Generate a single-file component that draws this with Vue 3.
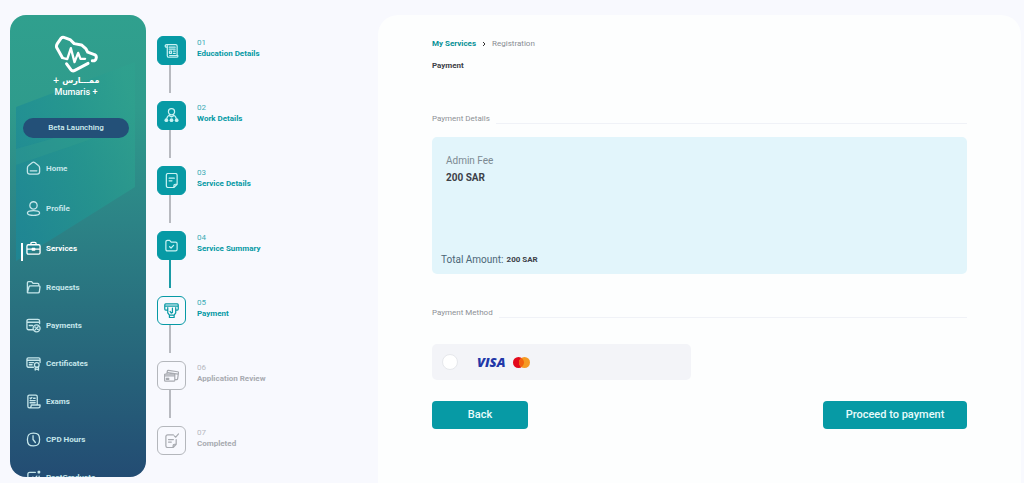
<script setup>
import { ref } from 'vue'

const method = ref('')

const nav = [
  { label: 'Home', icon: 'home' },
  { label: 'Profile', icon: 'profile' },
  { label: 'Services', icon: 'services', active: true },
  { label: 'Requests', icon: 'requests' },
  { label: 'Payments', icon: 'payments' },
  { label: 'Certificates', icon: 'certificates' },
  { label: 'Exams', icon: 'exams' },
  { label: 'CPD Hours', icon: 'clock' },
  { label: 'PostGraduate', icon: 'postgraduate' },
]

const navPaths = {
  home: 'M1.500 7.500 Q1.500 5.800 2.800 4.800 L6.500 1.800 Q8 .700 9.500 1.800 L13.200 4.800 Q14.500 5.800 14.500 7.500 V11.500 Q14.500 14 12 14 H4 Q1.500 14 1.500 11.500 Z M4.500 10.500 H11.500',
  profile: 'M8 .8 a3.900 3.900 0 1 1 0 7.800 a3.900 3.900 0 1 1 0 -7.800 Z M8 10.300 C11.500 10.300 14.500 11.100 14.500 12.900 C14.500 14.700 11.500 15.400 8 15.400 C4.500 15.400 1.500 14.700 1.500 12.900 C1.500 11.100 4.500 10.300 8 10.300 Z',
  services: 'M2.500 4 H13.500 Q15 4 15 5.500 V12.500 Q15 14 13.500 14 H2.500 Q1 14 1 12.500 V5.500 Q1 4 2.500 4 Z M5.200 4 V2.800 Q5.200 1.500 6.500 1.500 H9.500 Q10.800 1.500 10.800 2.800 V4 M1 8.700 H6.500 M9.500 8.700 H15 M6.700 8 H9.300 V9.600 H6.700 Z',
  requests: 'M1.500 13.500 V3 Q1.500 1.800 2.700 1.800 H6 L7.500 3.600 H12.500 Q13.700 3.600 13.700 4.800 V6.300 M1.500 13.500 L3.200 7.300 Q3.500 6.300 4.600 6.300 H13.700 Q15.100 6.300 14.900 7.600 L14.200 12.800 Q14 13.800 12.900 13.800 H2.200 Q1.500 13.800 1.500 13',
  payments: 'M7.500 12.500 H2.800 Q1 12.500 1 10.700 V3.300 Q1 1.500 2.800 1.500 H12.700 Q14.500 1.500 14.500 3.300 V6 M1 4.500 H14.500 M3.500 8 H7 M11.300 7.300 a3.700 3.700 0 1 1 0 7.400 a3.700 3.700 0 1 1 0 -7.400 Z M9.800 12.600 L12.900 9.400 M9.500 9.800 H10.300 M12.300 12.200 H13.100',
  certificates: 'M8 12 H2.500 Q1 12 1 10.500 V3.500 Q1 2 2.500 2 H13.500 Q15 2 15 3.500 V7 M1 4.500 H15 M3.500 7 H8 M3.500 9.300 H6.500 M11.500 7 a2.500 2.500 0 1 1 0 5 a2.500 2.500 0 1 1 0 -5 Z M9.800 11.500 V15 L11.500 13.900 L13.300 15 V11.500',
  exams: 'M2 13 V2.800 Q2 1.200 3.600 1.200 H10.500 Q12 1.200 12 2.800 V11.500 M5.500 11.700 H15 V12.700 Q15 14.700 13 14.700 H3.600 Q2 14.700 2 13 M5.500 11.700 V13 Q5.300 14.700 3.600 14.700 M4.300 4.300 L5 5 L6.300 3.700 M8 4.500 H9.800 M4.300 7 H9.800 M4.300 9.300 H9.800',
  clock: 'M8 1.200 C12.800 1.200 14.500 3 14.500 8 C14.500 13 12.800 14.800 8 14.800 C3.200 14.800 1.500 13 1.500 8 C1.500 3 3.200 1.200 8 1.200 Z M7.500 4 V8 L10 11.200',
  postgraduate: 'M10 2.500 H4 Q2 2.500 2 4.500 V12.500 Q2 14.500 4 14.500 H12 Q14 14.500 14 12.500 V6.500 M13 1.500 H14.500 V3 H13 Z M5 10.500 L7.300 7.500 L9 9.500 L11.500 6.500',
}

const steps = [
  { n: '01', label: 'Education Details', icon: 'education', state: 'done' },
  { n: '02', label: 'Work Details', icon: 'work', state: 'done' },
  { n: '03', label: 'Service Details', icon: 'note', state: 'done' },
  { n: '04', label: 'Service Summary', icon: 'folder', state: 'done last-done' },
  { n: '05', label: 'Payment', icon: 'pay', state: 'current' },
  { n: '06', label: 'Application Review', icon: 'cards', state: 'todo' },
  { n: '07', label: 'Completed', icon: 'completed', state: 'todo' },
]

const stepPaths = {
  education: 'M3.500 4.500 H2.500 Q1.300 4.500 1.300 3.200 Q1.300 1.800 2.800 1.800 H12.500 Q14 1.800 14 3.300 V13.500 M3.500 3 V13.500 Q3.500 15.200 5.200 15.200 H13.500 Q14.800 15.200 14.800 14 V13.500 H6 M5.500 4.500 H12 M5.500 6.500 H12 M5.800 8.700 H8 V11 H5.800 Z M10 8.700 H12 M10 11 H12',
  work: 'M8 .700 a3.300 3.300 0 1 1 0 6.600 a3.300 3.300 0 1 1 0 -6.600 Z M3 11 L3.600 9.500 Q4 8.500 5.200 8 L6 7 M13 11 L12.400 9.500 Q12 8.500 10.800 8 L10 7 M5.200 8 L8 9.500 L10.800 8',
  note: 'M10.500 15.500 H4.500 Q2.500 15.500 2.500 13.500 V2.500 Q2.500 .500 4.500 .500 H12 Q14 .500 14 2.500 V12 L10.500 15.500 V13.500 Q10.500 12 12 12 H14 M5.500 5.500 H11 M5.500 8.300 H8.500',
  folder: 'M2 12 V4.200 Q2 2.500 3.700 2.500 H6 L7.700 4.500 H12.300 Q14 4.500 14 6.200 V12 Q14 13.700 12.300 13.700 H3.700 Q2 13.700 2 12 Z M6 9.300 L7.500 10.700 L10.200 7.800',
  pay: 'M3.200 7.500 H1.800 Q.800 7.500 .800 6.500 V2 Q.800 1 1.800 1 H14.200 Q15.200 1 15.200 2 V6.500 Q15.200 7.500 14.200 7.500 H12.800 M.800 3.300 H15.200 M4 5 V10.500 L5.800 13 V15.500 H10.800 V13 L12.500 10.500 V5 M5.800 13 H10.800 M6.500 9 L7.800 10.700 L9 10 V5.500',
  cards: 'M1.500 6.500 H10.500 Q11.500 6.500 11.500 7.500 V13 Q11.500 14 10.500 14 H1.500 Q.500 14 .500 13 V7.500 Q.500 6.500 1.500 6.500 Z M.500 8.500 H11.500 M2.500 11 H5 V12.200 H2.500 Z M3 6.500 L3.500 3.500 Q3.700 2.500 4.700 2.600 L14.500 4 Q15.700 4.200 15.500 5.200 L14.500 11.500 Q14.300 12.500 13.300 12.400 L11.500 12.200 M4 4.800 L15 6.500',
  completed: 'M10 2 H4 Q2 2 2 4 V13.500 Q2 15.500 4 15.500 H9.700 L13 12 V7 M13 12 H11.200 Q9.700 12 9.700 13.500 V15.500 M4.800 7 H10 M4.800 9.700 H7.800 M11 3 L12.500 4.500 L15.500 1',
}
</script>

<template>
  <div class="page">
    <aside class="sidebar">
      <svg class="backdrop" viewBox="0 0 136 462" preserveAspectRatio="none" aria-hidden="true">
        <defs>
          <linearGradient id="facet" x1="0" y1="0.700" x2="1" y2="0.250">
            <stop offset="0" stop-color="#1c8997" stop-opacity=".75" />
            <stop offset=".55" stop-color="#239590" stop-opacity=".75" />
            <stop offset="1" stop-color="#2ea18e" stop-opacity=".7" />
          </linearGradient>
        </defs>
        <polygon points="6,92 125,47 125,172 42,224 6,246" fill="url(#facet)" />
        <polygon points="6,134 62,118 125,108 70,128 6,150" fill="#3aa58a" opacity=".25" />
      </svg>
      <div class="brand">
        <svg class="brand-mark" viewBox="162 104 136 118" aria-hidden="true">
          <g fill="none" stroke="#fff" stroke-width="9" stroke-linecap="round" stroke-linejoin="round">
            <path d="M187 172 L170 142 Q168 136 172 130 L183 114 Q188 109 194 112 L212 119 L223 130 L245 134 L258 145 L264 156 L286 164 Q292 168 289 176 Q287 183 278 182" />
            <path d="M200 191 L213 209 Q218 215 225 211 L265 190" />
            <path d="M187 173 L202 177 L213 144 L224 186 L235 158 L242 176 H256" stroke-width="7" />
          </g>
        </svg>
        <span class="brand-ar" dir="rtl">ممـــارس +</span>
        <span class="brand-en">Mumaris +</span>
      </div>
      <div class="beta">Beta Launching</div>
      <nav class="nav">
        <a v-for="item in nav" :key="item.label" href="#" :class="{ active: item.active }">
          <svg viewBox="0 0 16 16" aria-hidden="true"><path :d="navPaths[item.icon]" /></svg>
          <span>{{ item.label }}</span>
        </a>
      </nav>
    </aside>

    <ol class="steps">
      <li v-for="step in steps" :key="step.n" :class="step.state">
        <span class="tile">
          <svg viewBox="0 0 16 16" aria-hidden="true">
            <path :d="stepPaths[step.icon]" />
            <g v-if="step.icon === 'work'" class="solid">
              <circle cx="2.500" cy="13" r="2" />
              <circle cx="8" cy="13" r="2" />
              <circle cx="13.500" cy="13" r="2" />
            </g>
          </svg>
        </span>
        <span class="step-text">
          <span class="step-n">{{ step.n }}</span>
          <span class="step-label">{{ step.label }}</span>
        </span>
      </li>
    </ol>

    <main class="panel">
      <div class="crumbs">
        <a href="#">My Services</a>
        <svg viewBox="0 0 4 6" aria-hidden="true"><path d="M1 1 L3 3 L1 5" /></svg>
        <span>Registration</span>
      </div>
      <h1>Payment</h1>

      <h2><span>Payment Details</span></h2>
      <section class="fees">
        <div class="fee">
          <span class="fee-name">Admin Fee</span>
          <strong>200 SAR</strong>
        </div>
        <div class="total">
          <span>Total Amount:</span>
          <strong>200 SAR</strong>
        </div>
      </section>

      <h2 class="second"><span>Payment Method</span></h2>
      <label class="method">
        <input v-model="method" type="radio" name="method" value="card" aria-label="Visa or Mastercard" />
        <span class="visa">VISA</span>
        <svg class="mastercard" viewBox="0 0 17 11" aria-hidden="true">
          <circle cx="5.500" cy="5.500" r="5.500" fill="#e3091c" />
          <circle cx="11.500" cy="5.500" r="5.500" fill="#f59a23" />
          <path d="M8.500 .900 A5.500 5.500 0 0 1 8.500 10.100 A5.500 5.500 0 0 1 8.500 .900 Z" fill="#f2600f" />
        </svg>
      </label>

      <div class="actions">
        <button type="button" class="back">Back</button>
        <button type="button" class="proceed">Proceed to payment</button>
      </div>
    </main>
  </div>
</template>

<style>
body {
  background: #f8f9fe;
}
</style>

<style scoped>
.page {
  box-sizing: border-box;
  display: flex;
  height: 100vh;
  overflow: hidden;
  padding: 15px 3px 0 10px;
  font-family: Roboto, "Liberation Sans", sans-serif;
  font-size: 8px;
  line-height: 11px;
}
.sidebar {
  position: relative;
  flex: 0 0 136px;
  margin-bottom: 6px;
  border-radius: 16px;
  overflow: hidden;
  background: linear-gradient(#30a08e 0%, #2f9b8c 20%, #2c8386 45%, #286c7d 68%, #234c73 100%);
  color: #d3eff0;
}
.backdrop {
  position: absolute;
  inset: 0;
  width: 100%;
  height: 100%;
}
.brand {
  position: relative;
  display: flex;
  flex-direction: column;
  align-items: center;
  padding: 20px 4px 0 0;
  color: #fff;
}
.brand-mark {
  width: 45px;
  height: 39px;
}
.brand-ar {
  font: bold 8px/13px "DejaVu Sans", sans-serif;
}
.brand-en {
  font-size: 9px;
  font-weight: 500;
  line-height: 11px;
}
.beta {
  position: relative;
  margin: 20px 17px 0 13px;
  border-radius: 10px;
  background: #235078;
  font-weight: 500;
  line-height: 20px;
  text-align: center;
}
.nav {
  position: relative;
  padding-top: 10px;
}
.nav a {
  display: flex;
  align-items: center;
  gap: 5px;
  height: 38px;
  padding-left: 16px;
  color: #c5e6ea;
  font-weight: 700;
  text-decoration: none;
}
.nav a:nth-child(-n + 3) {
  height: 40px;
}
.nav svg {
  width: 15px;
  height: 15px;
}
.nav path {
  fill: none;
  stroke: currentColor;
  stroke-width: 1.400;
  stroke-linecap: round;
  stroke-linejoin: round;
}
.nav a.active {
  position: relative;
  color: #fff;
}
.nav a.active::before {
  content: "";
  position: absolute;
  left: 11px;
  top: 15px;
  width: 2px;
  height: 18px;
  background: #fff;
}
.steps {
  flex: 0 0 221px;
  margin: 0 0 0 11px;
  padding: 21px 0 0;
  list-style: none;
  color: #079aa5;
}
.steps li {
  position: relative;
  display: flex;
  gap: 11px;
  height: 65px;
}
.steps li:not(:last-child)::after {
  content: "";
  position: absolute;
  left: 12px;
  top: 29px;
  width: 2px;
  height: 28px;
  background: #b8bac0;
}
.steps li.last-done::after {
  background: #1b9ba5;
}
.tile {
  box-sizing: border-box;
  display: flex;
  align-items: center;
  justify-content: center;
  width: 29px;
  height: 29px;
  border: 1px solid #079aa5;
  border-radius: 6px;
}
.done .tile {
  background: #079aa5;
  color: #c9f2f3;
}
.tile svg {
  width: 15px;
  height: 15px;
}
.tile path {
  fill: none;
  stroke: currentColor;
  stroke-width: 1.300;
  stroke-linecap: round;
  stroke-linejoin: round;
}
.solid {
  fill: currentColor;
}
.todo {
  color: #a8abb1;
}
.todo .tile {
  border-color: #b4b7bc;
}
.step-text {
  display: flex;
  flex-direction: column;
  padding-top: 1px;
}
.step-n {
  opacity: 0.8;
}
.step-label {
  font-weight: 700;
}
.panel {
  flex: 1;
  padding: 23px 54px 0;
  border-radius: 20px 20px 0 0;
  background: #fdfefe;
  color: #3d4148;
}
.crumbs {
  display: flex;
  align-items: center;
  gap: 6px;
  color: #898d93;
}
.crumbs a {
  color: #079196;
  font-weight: 700;
  text-decoration: none;
}
.crumbs svg {
  width: 4px;
  height: 6px;
}
.crumbs path {
  fill: none;
  stroke: #333;
  stroke-width: 1;
}
h1 {
  margin: 11px 0 42px;
  font-size: 8px;
  font-weight: 700;
  line-height: 11px;
}
h2 {
  display: flex;
  align-items: flex-end;
  gap: 6px;
  margin: 0;
  color: #8d9196;
  font-size: 8px;
  font-weight: 400;
  line-height: 11px;
}
h2::after {
  content: "";
  flex: 1;
  height: 1px;
  background: #f0f2f7;
}
h2.second {
  margin-top: 33px;
}
.fees {
  display: flex;
  flex-direction: column;
  justify-content: space-between;
  box-sizing: border-box;
  min-height: 137px;
  margin-top: 13px;
  padding: 15px 9px 8px;
  border-radius: 5px;
  background: #e2f5fb;
}
.fee {
  display: flex;
  flex-direction: column;
  padding-left: 5px;
  font-size: 10px;
  line-height: 17px;
}
.fee-name {
  color: #7c8a92;
}
.total {
  display: flex;
  align-items: center;
  gap: 3px;
  line-height: 13px;
}
.total span {
  color: #4b6676;
  font-size: 10px;
}
.method {
  display: flex;
  align-items: center;
  box-sizing: border-box;
  width: 48%;
  min-width: 259px;
  height: 36px;
  margin-top: 26px;
  padding-left: 10px;
  border-radius: 5px;
  background: #f3f4f8;
}
.method input {
  appearance: none;
  width: 16px;
  height: 16px;
  margin: 0 19px 0 0;
  border: 1px solid #e6e8ec;
  border-radius: 50%;
  background: #fff;
}
.method input:checked {
  border: 5px solid #079aa5;
}
.visa {
  margin-right: 7px;
  color: #2237a8;
  font: italic 800 13px/16px "Open Sans", sans-serif;
}
.mastercard {
  width: 17px;
  height: 11px;
}
.actions {
  display: flex;
  justify-content: space-between;
  margin-top: 21px;
}
button {
  height: 28px;
  padding: 0;
  border: 0;
  border-radius: 4px;
  background: #079aa5;
  color: #e8fcfc;
  font: 500 11px/28px Roboto, "Liberation Sans", sans-serif;
}
.back {
  width: 96px;
}
.proceed {
  width: 144px;
}
</style>
